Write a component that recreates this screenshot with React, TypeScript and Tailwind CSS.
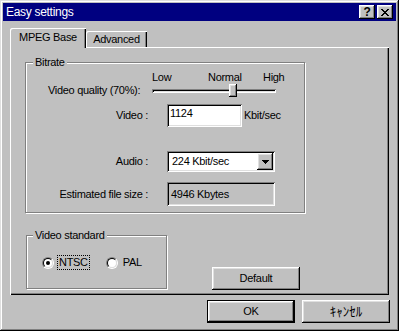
import React from "react";

function Radio({ checked }: { checked?: boolean }) {
  return (
    <div className="flex h-[12px] w-[12px] rounded-full border border-b-white border-l-[#808080] border-r-white border-t-[#808080]">
      <div className="flex flex-1 items-center justify-center rounded-full border border-b-[#dfdfdf] border-l-black border-r-[#dfdfdf] border-t-black bg-white">
        {checked && <div className="h-[4px] w-[4px] rounded-full bg-black" />}
      </div>
    </div>
  );
}

function Button({ label, isDefault, className }: { label: React.ReactNode; isDefault?: boolean; className?: string }) {
  return (
    <div className={"flex h-[23px] w-[88px] " + (isDefault ? "border border-black " : "") + (className ?? "")}>
      <div className="flex flex-1 items-center justify-center bg-[#c0c0c0] shadow-[inset_-1px_-1px_#000,inset_1px_1px_#fff,inset_-2px_-2px_#808080,inset_2px_2px_#dfdfdf]">
        {label}
      </div>
    </div>
  );
}

function TitleBar() {
  return (
    <div className="flex h-[18px] items-center bg-[#000080] pl-[3px] pr-[3px]">
      <span className="flex-1 text-[12px] tracking-[-0.3px] text-white">Easy settings</span>
      <div className="flex gap-[2px]">
        <div className="flex h-[14px] w-[16px] items-center justify-center bg-[#c0c0c0] text-[12px] font-bold leading-none shadow-[inset_-1px_-1px_#000,inset_1px_1px_#fff,inset_-2px_-2px_#808080,inset_2px_2px_#dfdfdf]">
          ?
        </div>
        <div className="flex h-[14px] w-[16px] items-center justify-center bg-[#c0c0c0] shadow-[inset_-1px_-1px_#000,inset_1px_1px_#fff,inset_-2px_-2px_#808080,inset_2px_2px_#dfdfdf]">
          <svg width="8" height="7" viewBox="0 0 8 7" shapeRendering="crispEdges">
            <path d="M0 0h2v1h1v1h2V1h1V0h2v1H7v1H6v1H5v1h1v1h1v1h1v1H6V6H5V5H3v1H2v1H0V6h1V5h1V4h1V3H2V2H1V1H0z" fill="#000" />
          </svg>
        </div>
      </div>
    </div>
  );
}

function Tabs() {
  return (
    <div className="relative z-10 flex h-[19px] items-end">
      <div className="-mb-px flex h-[20px] w-[76px] items-center justify-center rounded-tl-[2px] bg-[#c0c0c0] pb-[1px] shadow-[inset_1px_1px_#fff,inset_-1px_0_#000,inset_-2px_0_#808080]">
        MPEG Base
      </div>
      <div className="flex h-[16px] w-[61px] items-center justify-center rounded-tl-[2px] bg-[#c0c0c0] shadow-[inset_1px_1px_#fff,inset_-1px_0_#000,inset_-2px_0_#808080]">
        Advanced
      </div>
    </div>
  );
}

function FieldRow({ label, children, className }: { label: string; children: React.ReactNode; className?: string }) {
  return (
    <div className={"flex items-center " + (className ?? "")}>
      <span className="w-[122px] text-right">{label}</span>
      <div className="ml-[19px] flex items-center">{children}</div>
    </div>
  );
}

function Bitrate() {
  return (
    <div className="relative h-[151px] w-[280px] border border-[#808080] pt-[8px] shadow-[inset_1px_1px_#fff,1px_1px_#fff]">
      <span className="absolute -top-[7px] left-[7px] bg-[#c0c0c0] px-[2px]">Bitrate</span>

      <div className="flex h-[13px] items-center pl-[126px]">
        <span className="w-[56px]">Low</span>
        <span className="w-[55px]">Normal</span>
        <span>High</span>
      </div>

      <div className="flex h-[13px] items-center">
        <span className="w-[126px] pl-[22px]">Video quality (70%):</span>
        <div className="relative flex h-[13px] w-[124px] items-center">
          <div className="h-[4px] w-full shadow-[inset_1px_1px_#808080,inset_-1px_-1px_#fff,inset_2px_2px_#000,inset_-2px_-2px_#dfdfdf]" />
          <div className="absolute left-[77px] top-0 h-[13px] w-[8px] bg-[#c0c0c0] shadow-[inset_-1px_-1px_#000,inset_1px_1px_#fff,inset_-2px_-2px_#808080,inset_2px_2px_#dfdfdf]" />
        </div>
      </div>

      <FieldRow label="Video :" className="mt-[7px] h-[23px]">
        <div className="h-[23px] w-[75px] bg-white pl-[3px] pt-[3px] shadow-[inset_1px_1px_#808080,inset_-1px_-1px_#fff,inset_2px_2px_#000,inset_-2px_-2px_#dfdfdf]">
          1124
        </div>
        <span className="ml-[2px]">Kbit/sec</span>
      </FieldRow>

      <FieldRow label="Audio :" className="mt-[24px] h-[21px]">
        <div className="flex h-[21px] w-[108px] items-center justify-between bg-white pl-[5px] pr-[2px] shadow-[inset_1px_1px_#808080,inset_-1px_-1px_#fff,inset_2px_2px_#000,inset_-2px_-2px_#dfdfdf]">
          <span>224 Kbit/sec</span>
          <div className="flex h-[17px] w-[16px] items-center justify-center bg-[#c0c0c0] shadow-[inset_-1px_-1px_#000,inset_1px_1px_#fff,inset_-2px_-2px_#808080,inset_2px_2px_#dfdfdf]">
            <svg width="7" height="4" viewBox="0 0 7 4" shapeRendering="crispEdges">
              <path d="M0 0h7v1H6v1H5v1H4v1H3V3H2V2H1V1H0z" fill="#000" />
            </svg>
          </div>
        </div>
      </FieldRow>

      <FieldRow label="Estimated file size :" className="mt-[10px] h-[24px]">
        <div className="flex h-[24px] w-[108px] items-center pl-[4px] shadow-[inset_1px_1px_#808080,inset_-1px_-1px_#fff,inset_2px_2px_#000,inset_-2px_-2px_#dfdfdf]">
          4946 Kbytes
        </div>
      </FieldRow>
    </div>
  );
}

function VideoStandard() {
  return (
    <div className="relative ml-[1px] h-[54px] w-[141px] border border-[#808080] pl-[15px] pt-[19px] shadow-[inset_1px_1px_#fff,1px_1px_#fff]">
      <span className="absolute -top-[7px] left-[6px] bg-[#c0c0c0] px-[2px]">Video standard</span>
      <div className="flex items-center">
        <Radio checked />
        <span className="ml-[3px] border border-dotted border-black px-[1px]">NTSC</span>
        <div className="ml-[16px]">
          <Radio />
        </div>
        <span className="ml-[5px]">PAL</span>
      </div>
    </div>
  );
}

export default function App() {
  return (
    <div className="flex h-[331px] w-[399px] flex-col bg-[#c0c0c0] p-[3px] font-['Liberation_Sans','Noto_Sans_CJK_JP',Arial,sans-serif] text-[11px] leading-[13px] tracking-[-0.3px] text-black shadow-[inset_-1px_-1px_#000,inset_1px_1px_#dfdfdf,inset_-2px_-2px_#808080,inset_2px_2px_#fff]">
      <TitleBar />
      <div className="flex flex-col pl-[7px] pr-[6px] pt-[7px]">
        <Tabs />
        <div className="mr-px flex h-[248px] flex-col pl-[15px] pt-[15px] shadow-[inset_1px_1px_#fff,inset_-1px_-1px_#000,inset_-2px_-2px_#808080]">
          <Bitrate />
          <div className="mt-[22px] flex items-end">
            <VideoStandard />
            <Button label="Default" className="-mb-px ml-[45px] w-[87px]" />
          </div>
        </div>
        <div className="mt-[5px] flex justify-end gap-[7px]">
          <Button label="OK" isDefault />
          <Button label={<span className="text-[13px] tracking-normal">ｷｬﾝｾﾙ</span>} />
        </div>
      </div>
    </div>
  );
}
